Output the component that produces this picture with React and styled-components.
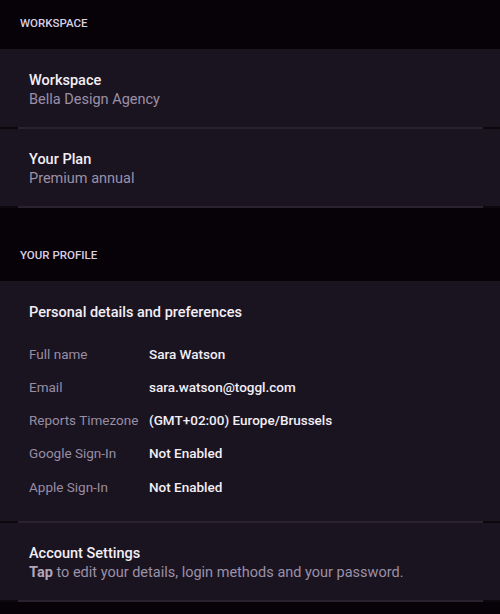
import React from "react";
import styled, { createGlobalStyle } from "styled-components";

const GlobalStyle = createGlobalStyle`
  html, body {
    margin: 0;
    padding: 0;
    background: #060208;
  }
  body {
    font-family: Roboto, "Noto Sans", sans-serif;
    -webkit-font-smoothing: antialiased;
  }
`;

const Page = styled.div`
  width: 500px;
  min-height: 614px;
  background: #060208;
  display: flex;
  flex-direction: column;
`;

const SectionHeader = styled.div`
  padding: ${({ $first }) => ($first ? "16px" : "40px")} 20px 19px;
  font-size: 11.5px;
  line-height: 14px;
  font-weight: 500;
  color: #d9cfe2;
  text-transform: uppercase;
`;

const Card = styled.div`
  background: #1a1420;
  display: flex;
  flex-direction: column;
`;

const Item = styled.div`
  padding: ${({ $top = 22 }) => $top}px 29px ${({ $bottom = 17 }) => $bottom}px;
  display: flex;
  flex-direction: column;
`;

const Title = styled.div`
  font-size: 14.5px;
  line-height: 19px;
  font-weight: 500;
  color: #f3eef6;
`;

const Subtitle = styled.div`
  font-size: 14.5px;
  line-height: 20px;
  color: #9c90a8;

  strong {
    font-weight: 700;
    color: #b2a6bc;
  }
`;

const Divider = styled.div`
  height: 2px;
  background: #0c080e;
  display: flex;
  padding: 0 17px 0 18px;

  &::before {
    content: "";
    flex: 1;
    background: #2a2230;
  }
`;

const DetailList = styled.div`
  margin-top: 21.5px;
  display: flex;
  flex-direction: column;
  gap: 13.25px;
`;

const DetailRow = styled.div`
  display: grid;
  grid-template-columns: 120px 1fr;
  line-height: 20px;
`;

const Label = styled.span`
  font-size: 13.5px;
  color: #998da4;
`;

const Value = styled.span`
  font-size: 13.5px;
  font-weight: 500;
  color: #f3eef6;
`;

const details = [
  ["Full name", "Sara Watson"],
  ["Email", "sara.watson@toggl.com"],
  ["Reports Timezone", "(GMT+02:00) Europe/Brussels"],
  ["Google Sign-In", "Not Enabled"],
  ["Apple Sign-In", "Not Enabled"],
];

export default function App() {
  return (
    <Page>
      <GlobalStyle />
      <SectionHeader $first>Workspace</SectionHeader>
      <Card>
        <Item>
          <Title>Workspace</Title>
          <Subtitle>Bella Design Agency</Subtitle>
        </Item>
        <Divider />
        <Item $top={21}>
          <Title>Your Plan</Title>
          <Subtitle>Premium annual</Subtitle>
        </Item>
        <Divider />
      </Card>

      <SectionHeader>Your Profile</SectionHeader>
      <Card>
        <Item $bottom={24}>
          <Title>Personal details and preferences</Title>
          <DetailList>
            {details.map(([label, value]) => (
              <DetailRow key={label}>
                <Label>{label}</Label>
                <Value>{value}</Value>
              </DetailRow>
            ))}
          </DetailList>
        </Item>
        <Divider />
        <Item $top={21}>
          <Title>Account Settings</Title>
          <Subtitle>
            <strong>Tap</strong> to edit your details, login methods and your
            password.
          </Subtitle>
        </Item>
        <Divider />
      </Card>
    </Page>
  );
}
